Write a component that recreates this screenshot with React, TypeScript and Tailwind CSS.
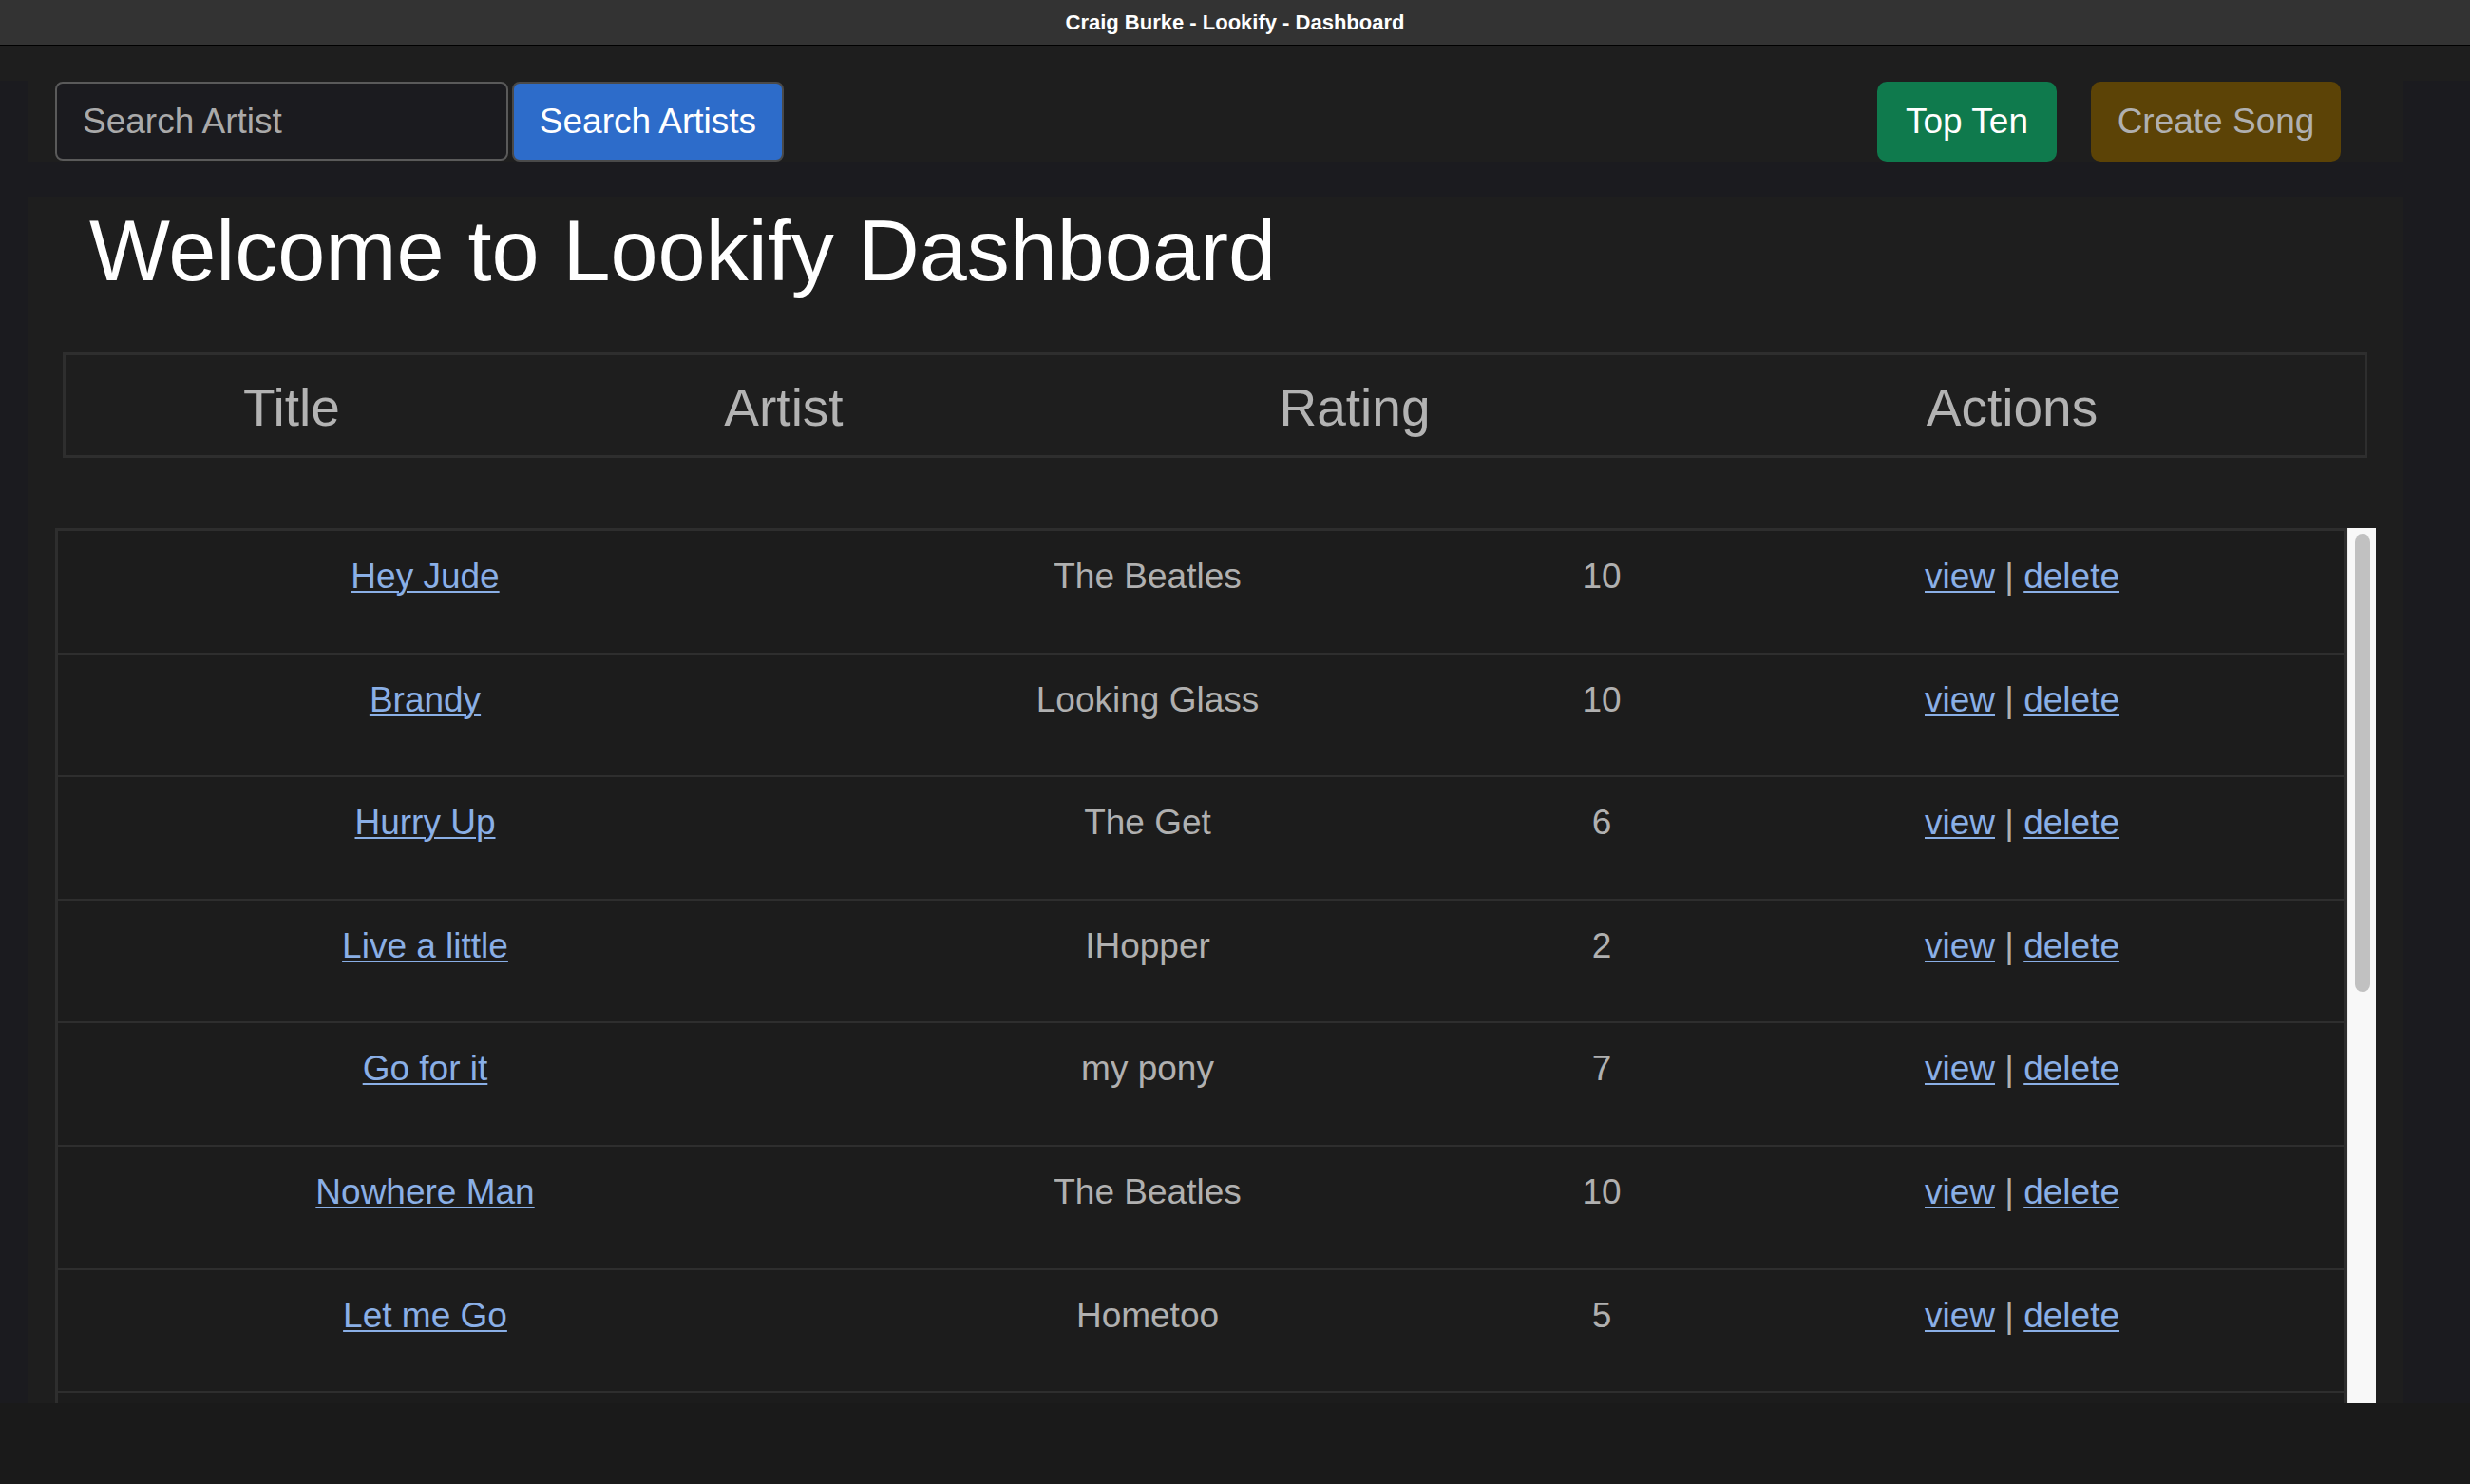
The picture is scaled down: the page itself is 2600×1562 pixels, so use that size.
import React from "react";

const songs = [
  { title: "Hey Jude", artist: "The Beatles", rating: 10 },
  { title: "Brandy", artist: "Looking Glass", rating: 10 },
  { title: "Hurry Up", artist: "The Get", rating: 6 },
  { title: "Live a little", artist: "IHopper", rating: 2 },
  { title: "Go for it", artist: "my pony", rating: 7 },
  { title: "Nowhere Man", artist: "The Beatles", rating: 10 },
  { title: "Let me Go", artist: "Hometoo", rating: 5 },
];

function SongRow({ song }: { song?: { title: string; artist: string; rating: number } }) {
  return (
    <div className="grid grid-cols-[773px_748px_208px_1fr] h-[129.6px] shrink-0 border-b-2 border-[#2e2e2e] pt-[20px] text-center leading-[55px]">
      {song ? (
        <>
          <div>
            <a href="#" className="text-[#8aafe6] underline decoration-2 underline-offset-[3px]">
              {song.title}
            </a>
          </div>
          <div className="text-[#b0b0b0]">{song.artist}</div>
          <div className="text-[#b0b0b0]">{song.rating}</div>
          <div className="text-[#b0b0b0]">
            <a href="#" className="text-[#8aafe6] underline decoration-2 underline-offset-[3px]">
              view
            </a>{" "}
            |{" "}
            <a href="#" className="text-[#8aafe6] underline decoration-2 underline-offset-[3px]">
              delete
            </a>
          </div>
        </>
      ) : null}
    </div>
  );
}

export default function App() {
  return (
    <div
      className="w-[2600px] h-[1562px] flex flex-col overflow-hidden bg-[#1b1b1f]"
      style={{ fontFamily: '"Liberation Sans", Arial, sans-serif' }}
    >
      {/* window title bar */}
      <div className="h-[48px] shrink-0 bg-[#333333] border-b border-black flex items-center justify-center text-white text-[22px] font-bold">
        Craig Burke - Lookify - Dashboard
      </div>

      {/* page */}
      <div className="h-[1429px] shrink-0 flex flex-col overflow-hidden text-[37px]">
        <div className="h-[37px] shrink-0 bg-[#1e1e1e]" />

        {/* nav */}
        <div className="ml-[30px] mr-[71px] h-[85px] shrink-0 bg-[#1e1e1e] flex items-center pl-[28px] pr-[65px]">
          <input
            type="text"
            placeholder="Search Artist"
            className="w-[477px] h-[83px] rounded-[8px] border-2 border-[#5a5a5a] bg-[#1b1b1f] pl-[27px] text-[37px] text-[#b0b0b0] placeholder:text-[#aaaaaa] outline-none"
          />
          <button className="ml-[4px] w-[286px] h-[84px] rounded-[8px] border-2 border-[#4a4a4a] bg-[#2d6cca] text-white text-[37px]">
            Search Artists
          </button>
          <div className="flex-1" />
          <button className="w-[189px] h-[84px] rounded-[10px] bg-[#0f7a4d] text-white text-[37px]">
            Top Ten
          </button>
          <button className="ml-[36px] w-[263px] h-[84px] rounded-[10px] bg-[#5c4306] text-[#b0b0b0] text-[37px]">
            Create Song
          </button>
        </div>

        <div className="h-[37px] shrink-0" />

        {/* main container */}
        <div className="ml-[30px] mr-[71px] flex-1 min-h-0 bg-[#1e1e1e] flex flex-col">
          <h1 className="pl-[64px] pt-[2px] h-[110px] leading-[110px] text-[90px] text-white font-medium shrink-0">
            Welcome to Lookify Dashboard
          </h1>

          {/* table header */}
          <div className="mt-[54px] ml-[36px] mr-[37px] h-[111px] shrink-0 border-[3px] border-[#2e2e2e] grid grid-cols-[476px_560px_642px_1fr] items-center pt-[5px] text-center text-[55px] font-medium text-[#b3b3b3]">
            <div>Title</div>
            <div>Artist</div>
            <div>Rating</div>
            <div>Actions</div>
          </div>

          {/* table body */}
          <div className="mt-[74px] ml-[28px] w-[2443px] flex-1 min-h-0 flex overflow-hidden">
            <div className="flex-1 flex flex-col border-l-[3px] border-t-[3px] border-r-4 border-[#2e2e2e] bg-[#1c1c1c]">
              {songs.map((s) => (
                <SongRow key={s.title} song={s} />
              ))}
              <SongRow />
            </div>
            <div className="w-[30px] shrink-0 bg-[#f8f8f8] border-l border-[#ececec] pt-[6px] pl-[7px]">
              <div className="w-[16px] h-[482px] rounded-full bg-[#c1c1c1]" />
            </div>
          </div>
        </div>
      </div>

      <div className="flex-1 bg-[#1a1a1a]" />
    </div>
  );
}
